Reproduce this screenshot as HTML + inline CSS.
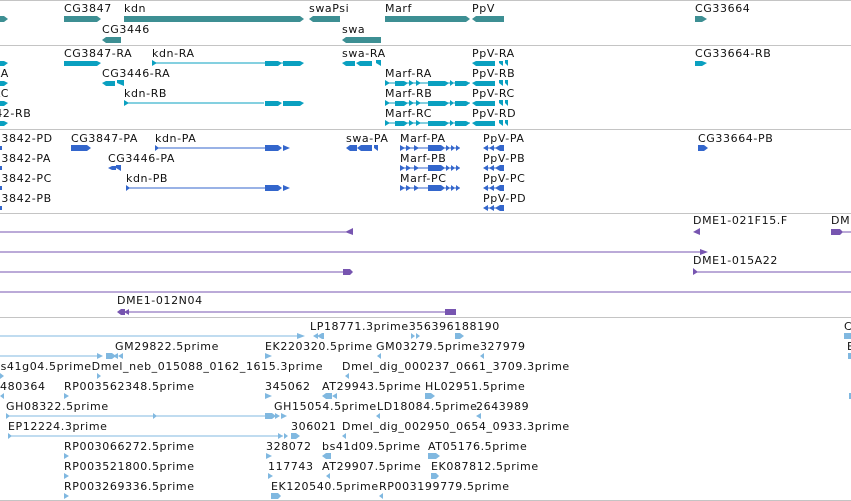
<!DOCTYPE html>
<html><head><meta charset="utf-8"><style>
html,body{margin:0;padding:0;background:#fff;overflow:hidden}
svg{display:block}
text{font-family:"DejaVu Sans","Liberation Sans",sans-serif;font-size:11px;letter-spacing:0.6px;fill:#111}
.g{fill:#3d8f93}.t{fill:#0aa0c0}.p{fill:#3366cc}.u{fill:#7755b0}.b{fill:#80b8e0}
.tl{stroke:#0aa0c0;stroke-width:1}.pl{stroke:#3366cc}.ul{stroke:#7755b0}.bl{stroke:#80b8e0}
</style></head><body>
<svg width="851" height="501" viewBox="0 0 851 501">
<g stroke="#c4c4c4" stroke-width="1">
<line x1="0" y1="0.5" x2="851" y2="0.5"/><line x1="0" y1="45.5" x2="851" y2="45.5"/>
<line x1="0" y1="129.5" x2="851" y2="129.5"/><line x1="0" y1="213.5" x2="851" y2="213.5"/>
<line x1="0" y1="317.5" x2="851" y2="317.5"/><line x1="0" y1="500.5" x2="851" y2="500.5"/>
</g>
<!-- gene track -->
<g class="g">
<polygon points="0,16 4,16 8,19 4,22 0,22"/>
<polygon points="64,16 97,16 101,19 97,22 64,22"/>
<polygon points="124,16 300,16 304,19 300,22 124,22"/>
<polygon points="313,16 340,16 340,22 313,22 309,19"/>
<polygon points="385,16 466,16 470,19 466,22 385,22"/>
<polygon points="476,16 504,16 504,22 476,22 472,19"/>
<polygon points="695,16 702,16 707,19 702,22 695,22"/>
<polygon points="106,37 121,37 121,43 106,43 102,40"/>
<polygon points="346,37 381,37 381,43 346,43 342,40"/>
</g>
<text x="64" y="12">CG3847</text><text x="124" y="12">kdn</text><text x="309" y="12">swaPsi</text>
<text x="385" y="12">Marf</text><text x="472" y="12">PpV</text><text x="695" y="12">CG33664</text>
<text x="102" y="33">CG3446</text><text x="342" y="33">swa</text>
<!-- transcript track -->
<g class="t">
<polygon points="0,61 4,61 8,63 4,66 0,66"/>
<polygon points="64,61 97,61 101,63 97,66 64,66"/>
<polygon points="152,60 152,66 157,63"/><rect x="152" y="62.5" width="140" height="1"/>
<polygon points="265,61 278,61 282,63 278,66 265,66"/><polygon points="283,61 300,61 304,63 300,66 283,66"/>
<polygon points="346,61 355,61 355,66 346,66 342,63"/><polygon points="360,61 372,61 372,66 360,66 356,63"/><polygon points="376,60 381,60 381,66 376,63"/>
<polygon points="476,61 495,61 495,66 476,66 472,63"/><polygon points="499,61 503,61 503,66 499,63"/><polygon points="505,60 508,60 508,66 505,63"/>
<polygon points="695,61 702,61 707,63 702,66 695,66"/>
<polygon points="0,81 4,81 8,83 4,86 0,86"/>
<polygon points="106,81 115,81 115,86 106,86 102,83"/><polygon points="117,80 124,80 124,86 117,83"/>
<polygon points="0,101 4,101 8,103 4,106 0,106"/>
<polygon points="124,100 124,106 129,103"/><rect x="124" y="102.5" width="140" height="1"/>
<polygon points="265,101 278,101 282,103 278,106 265,106"/><polygon points="283,101 300,101 304,103 300,106 283,106"/>
<polygon points="0,121 4,121 8,123 4,126 0,126"/>
</g>
<g class="t">
<g id="marfR"><rect x="385" y="82.5" width="85" height="1"/>
<polygon points="385,80 385,86 390,83"/><polygon points="395,81 404,81 408,83 404,86 395,86"/><polygon points="409,80 409,86 414,83"/><polygon points="416,80 416,86 421,83"/><polygon points="428,81 445,81 449,83 445,86 428,86"/><polygon points="450,80 450,86 454,83"/><polygon points="455,81 466,81 470,83 466,86 455,86"/></g>
<use href="#marfR" y="20"/><use href="#marfR" y="40"/>
<g id="ppvR"><polygon points="476,81 495,81 495,86 476,86 472,83"/><polygon points="499,80 503,80 503,86 499,83"/><polygon points="505,80 508,80 508,86 505,83"/></g>
<use href="#ppvR" y="20"/><use href="#ppvR" y="40"/>
</g>
<text x="64" y="57">CG3847-RA</text><text x="152" y="57">kdn-RA</text><text x="342" y="57">swa-RA</text><text x="472" y="57">PpV-RA</text><text x="695" y="57">CG33664-RB</text>
<text x="-7" y="77">RA</text><text x="102" y="77">CG3446-RA</text><text x="385" y="77">Marf-RA</text><text x="472" y="77">PpV-RB</text>
<text x="-7" y="97">RC</text><text x="124" y="97">kdn-RB</text><text x="385" y="97">Marf-RB</text><text x="472" y="97">PpV-RC</text>
<text x="-20" y="117">3842-RB</text><text x="385" y="117">Marf-RC</text><text x="472" y="117">PpV-RD</text>
<!-- protein track -->
<g class="p">
<rect x="0" y="146" width="2" height="4"/><rect x="0" y="166" width="2" height="4"/><rect x="0" y="186" width="2" height="4"/><rect x="0" y="206" width="2" height="4"/>
<polygon points="71,145 87,145 91,148 87,151 71,151"/>
<polygon points="155,145 155,151 159,148"/><rect x="155" y="147.5" width="110" height="1"/>
<polygon points="265,145 278,145 282,148 278,151 265,151"/><polygon points="283,145 283,151 290,148"/>
<polygon points="350,145 357,145 357,151 350,151 346,148"/><polygon points="361,145 372,145 372,151 361,151 357,148"/><polygon points="374,145 378,145 378,151 374,148"/>
<polygon points="698,145 704,145 708,148 704,151 698,151"/>
<polygon points="112,166 116,166 116,170 112,170 108,168"/><polygon points="116,165 121,165 121,171 116,168"/>
<polygon points="126,185 126,191 130,188"/><rect x="126" y="187.5" width="140" height="1"/>
<polygon points="265,185 278,185 282,188 278,191 265,191"/><polygon points="283,185 283,191 290,188"/>
<g id="marfP"><rect x="400" y="147.5" width="60" height="1"/>
<polygon points="400,145 400,151 405,148"/><polygon points="406,145 406,151 411,148"/><polygon points="414,145 414,151 419,148"/><polygon points="428,145 441,145 445,148 441,151 428,151"/><polygon points="446,145 446,151 450,148"/><polygon points="451,145 451,151 455,148"/><polygon points="456,145 456,151 460,148"/></g>
<use href="#marfP" y="20"/><use href="#marfP" y="40"/>
<g id="ppvP"><polygon points="483,148 488,145 488,151"/><polygon points="489,148 494,145 494,151"/><polygon points="495,148 500,145 504,145 504,151 500,151"/><rect x="486" y="147.5" width="16" height="1"/></g>
<use href="#ppvP" y="20"/><use href="#ppvP" y="40"/><use href="#ppvP" y="60"/>
</g>
<text x="-16" y="142">CG3842-PD</text><text x="71" y="142">CG3847-PA</text><text x="155" y="142">kdn-PA</text><text x="346" y="142">swa-PA</text><text x="400" y="142">Marf-PA</text><text x="483" y="142">PpV-PA</text><text x="698" y="142">CG33664-PB</text>
<text x="-16" y="162">CG3842-PA</text><text x="108" y="162">CG3446-PA</text><text x="400" y="162">Marf-PB</text><text x="483" y="162">PpV-PB</text>
<text x="-16" y="182">CG3842-PC</text><text x="126" y="182">kdn-PB</text><text x="400" y="182">Marf-PC</text><text x="483" y="182">PpV-PC</text>
<text x="-16" y="202">CG3842-PB</text><text x="483" y="202">PpV-PD</text>
<!-- purple track -->
<g class="u">
<rect x="0" y="231.5" width="350" height="1"/><polygon points="345,232 353,228 353,235"/>
<polygon points="693,232 700,228 700,235"/>
<polygon points="831,229 840,229 843,232 840,235 831,235"/><rect x="840" y="231.5" width="11" height="1"/>
<rect x="0" y="251.5" width="705" height="1"/><polygon points="700,249 708,252 700,255"/>
<rect x="0" y="271.5" width="350" height="1"/><polygon points="343,269 350,269 353,272 350,275 343,275"/>
<polygon points="693,268 693,275 698,272"/><rect x="693" y="271.5" width="158" height="1"/>
<rect x="0" y="291.5" width="851" height="1"/>
<polygon points="117,312 121,309 125,309 125,315 121,315"/><polygon points="124,312 129,309 129,315"/><rect x="125" y="311.5" width="325" height="1"/><rect x="445" y="309" width="11" height="6"/>
</g>
<text x="693" y="224">DME1-021F15.F</text><text x="831" y="224">DME1</text>
<text x="693" y="264">DME1-015A22</text><text x="117" y="304">DME1-012N04</text>
<!-- EST track -->
<g class="b">
<rect x="0" y="335.5" width="300" height="1"/><polygon points="297,333 305,336 297,339"/>
<polygon points="313,336 318,333 318,339"/><polygon points="317,336 322,333 324,333 324,339 322,339"/>
<polygon points="411,333 411,339 415,336"/><polygon points="416,333 416,339 420,336"/>
<polygon points="455,333 460,333 464,336 460,339 455,339"/>
<rect x="844" y="333" width="7" height="6"/>
<rect x="0" y="355.5" width="100" height="1"/><polygon points="97,353 103,356 97,359"/>
<polygon points="106,353 112,353 116,356 112,359 106,359"/><polygon points="113,356 118,353 118,359"/><polygon points="118,356 123,353 123,359"/>
<polygon points="265,353 265,359 272,356"/><polygon points="377,356 381,353 381,359"/><polygon points="480,356 484,353 484,359"/>
<rect x="848" y="353" width="3" height="6"/>
<polygon points="0,373 4,376 0,379"/><polygon points="97,373 97,379 101,376"/><polygon points="345,376 349,373 349,379"/>
<polygon points="0,396 4,393 4,399"/><polygon points="64,393 64,399 69,396"/><polygon points="265,393 265,399 272,396"/>
<polygon points="322,396 326,393 332,393 332,399 326,399"/><polygon points="332,396 337,393 337,399"/>
<polygon points="425,393 431,393 435,396 431,399 425,399"/><rect x="849" y="393" width="2" height="6"/>
<polygon points="6,413 6,419 10,416"/><rect x="6" y="415.5" width="270" height="1"/><polygon points="153,413 153,419 157,416"/>
<polygon points="265,413 272,413 276,416 272,419 265,419"/><polygon points="275,413 275,419 280,416"/><polygon points="281,413 281,419 287,416"/>
<polygon points="376,416 380,413 380,419"/><polygon points="476,416 481,413 481,419"/>
<polygon points="8,433 8,439 12,436"/><rect x="8" y="435.5" width="275" height="1"/>
<polygon points="278,433 278,439 283,436"/><polygon points="284,433 284,439 288,436"/>
<polygon points="291,433 296,433 300,436 296,439 291,439"/><polygon points="342,436 346,433 346,439"/>
<polygon points="64,453 64,459 69,456"/><polygon points="266,453 266,459 272,456"/>
<polygon points="322,456 326,453 331,453 331,459 326,459"/><polygon points="428,453 436,453 440,456 436,459 428,459"/>
<polygon points="64,473 64,479 69,476"/><polygon points="268,473 268,479 273,476"/><polygon points="326,476 330,473 330,479"/>
<polygon points="431,473 436,473 439,476 436,479 431,479"/>
<polygon points="64,493 64,499 69,496"/><polygon points="271,493 278,493 281,496 278,499 271,499"/><polygon points="379,496 383,493 383,499"/>
</g>
<text x="310" y="330">LP18771.3prime356396188190</text><text x="844" y="330">CG</text>
<text x="115" y="350">GM29822.5prime</text><text x="265" y="350">EK220320.5prime</text><text x="376" y="350">GM03279.5prime327979</text><text x="847" y="350">EK</text>
<text x="-7" y="370">bs41g04.5primeDmel_neb_015088_0162_1615.3prime</text><text x="342" y="370">Dmel_dig_000237_0661_3709.3prime</text>
<text x="0" y="390">480364</text><text x="64" y="390">RP003562348.5prime</text><text x="265" y="390">345062</text><text x="322" y="390">AT29943.5prime</text><text x="425" y="390">HL02951.5prime</text>
<text x="6" y="410">GH08322.5prime</text><text x="274" y="410">GH15054.5prime</text><text x="377" y="410">LD18084.5prime</text><text x="476" y="410">2643989</text>
<text x="8" y="430">EP12224.3prime</text><text x="291" y="430">306021</text><text x="342" y="430">Dmel_dig_002950_0654_0933.3prime</text>
<text x="64" y="450">RP003066272.5prime</text><text x="266" y="450">328072</text><text x="322" y="450">bs41d09.5prime</text><text x="428" y="450">AT05176.5prime</text>
<text x="64" y="470">RP003521800.5prime</text><text x="268" y="470">117743</text><text x="322" y="470">AT29907.5prime</text><text x="431" y="470">EK087812.5prime</text>
<text x="64" y="490">RP003269336.5prime</text><text x="271" y="490">EK120540.5prime</text><text x="379" y="490">RP003199779.5prime</text>
</svg>
</body></html>
